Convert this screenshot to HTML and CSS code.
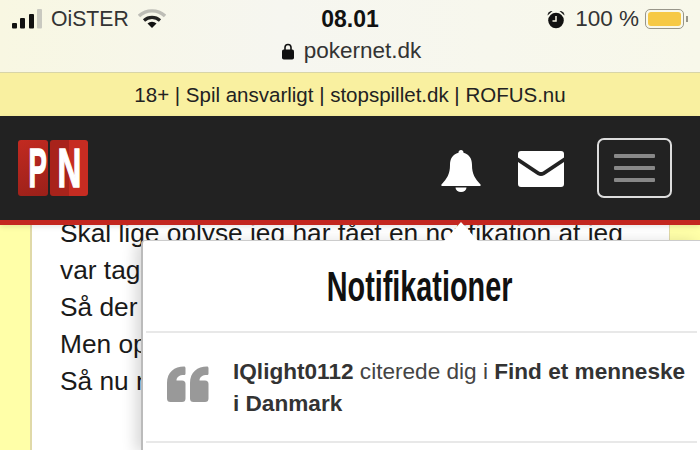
FILE: index.html
```html
<!DOCTYPE html>
<html lang="da">
<head>
    <meta charset="UTF-8">
    <title>pokernet.dk</title>
    <link rel="stylesheet" href="styles.css">
</head>
<body>
    <div class="browser-bar">
        <div class="status-row">
            <div class="status-left">
                <svg class="signal" width="31" height="20" viewBox="0 0 31 20">
                    <rect x="0" y="14" width="5" height="5.500" rx="1" fill="#111"/>
                    <rect x="8" y="9" width="5" height="10.500" rx="1" fill="#111"/>
                    <rect x="17" y="5" width="5" height="14.500" rx="1" fill="#111"/>
                    <rect x="25" y="0" width="5" height="19.500" rx="1" fill="#c9c9c0"/>
                </svg>
                <span>OiSTER</span>
                <svg class="wifi" width="28" height="22" viewBox="0 0 28 22">
                    <path d="M1 8 A19 19 0 0 1 27 8" fill="none" stroke="#bdbdb6" stroke-width="3.400"/>
                    <path d="M6 12.500 A12 12 0 0 1 22 12.500" fill="none" stroke="#222" stroke-width="3.200"/>
                    <path d="M14 20 L9.500 15.500 A6.500 6.500 0 0 1 18.500 15.500 Z" fill="#111"/>
                </svg>
            </div>
            <div class="clock">08.01</div>
            <div class="status-right">
                <svg class="alarm" width="18" height="19" viewBox="0 0 18 19">
                    <circle cx="9" cy="10.500" r="7.800" fill="#111"/>
                    <path d="M0.500 5.500A4.500 4.500 0 0 1 5.500 1z" fill="#111"/>
                    <path d="M17.500 5.500A4.500 4.500 0 0 0 12.500 1z" fill="#111"/>
                    <path d="M9 6V11H5.500" fill="none" stroke="#f7f6e6" stroke-width="1.500"/>
                </svg>
                <span>100 %</span>
                <div class="battery"><div class="battery-fill"></div></div>
                <div class="battery-tip"></div>
            </div>
        </div>
        <div class="url-row">
            <svg width="12" height="17" viewBox="0 0 12 17">
                <path d="M3 7V4.500a3 3 0 0 1 6 0V7" fill="none" stroke="#111" stroke-width="1.600"/>
                <rect x="0" y="6.500" width="12" height="10" rx="1.800" fill="#111"/>
            </svg>
            <span>pokernet.dk</span>
        </div>
    </div>

    <div class="age-banner">18+ | Spil ansvarligt | stopspillet.dk | ROFUS.nu</div>

    <nav class="navbar">
        <div class="logo">
            <div class="logo-tile logo-p"><span>P</span></div>
            <div class="logo-tile logo-n"><span>N</span></div>
        </div>
        <div class="nav-icons">
            <svg class="bell" width="40" height="42" viewBox="0 0 40 42">
                <path d="M20 0c1.500 0 2.500 1 2.500 2.700C28.500 4 31 9 31 15c0 9 3 13.500 8.500 19.500 .6 .9 0 1.500-1 1.500H1.500c-1 0-1.600-.6-1-1.500C6 28.500 9 24 9 15c0-6 2.500-11 8.500-12.300C17.500 1 18.500 0 20 0z" fill="#fff"/>
                <path d="M14.500 37.500a5.500 4.500 0 0 0 11 0z" fill="#fff"/>
            </svg>
            <svg class="mail" width="46" height="36" viewBox="0 0 46 36">
                <path d="M3 0H43a3 3 0 0 1 3 3V6.500L25 20.500a4 4 0 0 1-4 0L0 6.500V3a3 3 0 0 1 3-3z" fill="#fff"/>
                <path d="M0 11L19.500 24a6.500 6.500 0 0 0 7 0L46 11V33a3 3 0 0 1-3 3H3a3 3 0 0 1-3-3z" fill="#fff"/>
            </svg>
            <button class="menu-toggle">
                <span></span>
                <span></span>
                <span></span>
            </button>
        </div>
    </nav>

    <main class="page">
        <div class="post">
            <p>Skal lige oplyse jeg har fået en notifikation at jeg</p>
            <p>var tage</p>
            <p>Så der</p>
            <p>Men op</p>
            <p>Så nu n</p>
        </div>
    </main>

    <!-- dropdown lies over the post -->
    <div class="notif-arrow"></div>
    <div class="notif-panel">
        <div class="notif-title"><h3>Notifikationer</h3></div>
        <div class="notif-item">
            <svg class="quote" width="42" height="36" viewBox="0 0 42 36">
                <path d="M18.500 2V7.500C18.500 8.500 17.800 9 17 9 12.500 9 9.500 11 9.500 14.500H15a3.500 3.500 0 0 1 3.500 3.500V32.500a3.500 3.500 0 0 1-3.500 3.500H3.500a3.500 3.500 0 0 1-3.500-3.500V17C0 6 7.500 .5 17 .5c.8 0 1.500 .6 1.500 1.500z" fill="#999"/>
                <path d="M41.500 2V7.500C41.500 8.500 40.800 9 40 9 35.500 9 32.500 11 32.500 14.500H38a3.500 3.500 0 0 1 3.500 3.500V32.500a3.500 3.500 0 0 1-3.500 3.500H26.500a3.500 3.500 0 0 1-3.500-3.500V17C23 6 30.500 .5 40 .5c.8 0 1.500 .6 1.500 1.500z" fill="#999"/>
            </svg>
            <div class="notif-text"><b>IQlight0112</b> citerede dig i <b>Find et menneske i Danmark</b></div>
        </div>
    </div>
</body>
</html>
```

FILE: styles.css
```css
html, body {
    margin: 0;
    padding: 0;
}

body {
    position: relative;
    width: 700px;
    height: 450px;
    overflow: hidden;
    font-family: "Liberation Sans", Arial, sans-serif;
    background-color: #ffffa8;
}

.browser-bar {
    height: 73px;
    box-sizing: border-box;
    background: linear-gradient(90deg, #f8f7e2, #f6f6f0 40%, #f8f8ea);
    border-bottom: 1px solid #d8d5a8;
    color: #1a1a1a;
}

.status-row {
    display: flex;
    justify-content: space-between;
    align-items: center;
    height: 38px;
    padding: 0 12px;
}

.status-left, .status-right {
    display: flex;
    align-items: center;
    width: 210px;
    font-size: 21.200px;
    color: #333;
}

.status-left span {
    margin: 0 9px 0 8px;
}

.status-right {
    justify-content: flex-end;
    font-size: 22.500px;
}

.status-right span {
    margin: 0 6px 0 10px;
}

.clock {
    font-size: 23px;
    font-weight: bold;
    color: #111;
}

.battery {
    width: 39px;
    height: 20px;
    box-sizing: border-box;
    padding: 2px;
    border: 1.500px solid #98968a;
    border-radius: 5px;
}

.battery-fill {
    height: 100%;
    background-color: #f6c945;
    border-radius: 3px;
}

.battery-tip {
    width: 2px;
    height: 6px;
    margin-left: 2px;
    background-color: #98968a;
}

.url-row {
    display: flex;
    justify-content: center;
    align-items: center;
    gap: 10px;
    padding-left: 3px;
    font-size: 22.500px;
    color: #333;
}

.age-banner {
    height: 43px;
    line-height: 43px;
    text-align: center;
    font-size: 20.500px;
    color: #222;
    background-color: #f9f0a0;
}

.navbar {
    position: relative;
    z-index: 1;
    display: flex;
    justify-content: space-between;
    align-items: center;
    height: 104px;
    padding: 0 28px 0 18px;
    background-color: #222;
    border-bottom: 5px solid #c3261f;
    box-shadow: 0 2px 5px rgba(0, 0, 0, 0.1);
}

.logo {
    display: flex;
    gap: 2px;
}

.logo-tile {
    height: 56px;
    line-height: 56px;
    text-align: center;
    font-size: 55px;
    font-weight: bold;
    color: #fff;
    border-radius: 3px;
    -webkit-text-stroke: 1.500px #fff;
}

.logo-tile span {
    display: inline-block;
}

.logo-p {
    width: 30px;
    background: linear-gradient(160deg, #c22a21, #9a2019);
}

.logo-p span {
    width: 30px;
    transform: translateX(3px) scaleX(0.5);
}

.logo-n {
    width: 38px;
    background: linear-gradient(90deg, #a8231b 50%, #c62c22 50%);
}

.logo-n span {
    width: 38px;
    transform: scaleX(0.6);
}

.nav-icons {
    display: flex;
    align-items: center;
    gap: 33px;
}

.bell {
    margin: 6px 4px 0 0;
}

.mail {
    margin-top: 2px;
}

.menu-toggle {
    display: flex;
    flex-direction: column;
    justify-content: center;
    gap: 8px;
    width: 75px;
    height: 60px;
    padding: 0 15px;
    background: none;
    border: 2px solid #ddd;
    border-radius: 7px;
}

.menu-toggle span {
    height: 4px;
    background-color: #888;
    border-radius: 1px;
}

.page {
    display: flex;
    height: 235px;
    margin-top: -10px;
    padding: 0 30px;
}

.post {
    flex-grow: 1;
    padding: 0 28px;
    background-color: #fff;
    border-left: 2px solid #e0d9a8;
    border-right: 1px solid #e0d9a8;
    font-size: 26.300px;
    line-height: 37px;
    color: #1a1a1a;
}

.post p {
    margin: 0;
    white-space: nowrap;
}

.notif-arrow {
    position: absolute;
    z-index: 3;
    left: 444px;
    top: 222px;
    border-left: 17px solid transparent;
    border-right: 17px solid transparent;
    border-bottom: 19px solid #fff;
}

.notif-panel {
    position: absolute;
    z-index: 2;
    left: 141px;
    top: 240px;
    width: 559px;
    height: 210px;
    box-sizing: border-box;
    padding: 0 3px;
    background-color: #fff;
    border-left: 2px solid #bbb;
    border-top: 1px solid #ccc;
    border-radius: 4px 0 0 0;
    box-shadow: -6px 2px 14px rgba(0, 0, 0, 0.15);
}

.notif-title {
    height: 90px;
    text-align: center;
    border-bottom: 2px solid #e8e8e8;
}

.notif-title h3 {
    display: inline-block;
    margin: 0 4px 0 0;
    font-size: 43px;
    line-height: 90px;
    color: #111;
    transform: scaleX(0.67);
}

.notif-item {
    display: flex;
    align-items: center;
    gap: 24px;
    height: 108px;
    padding: 0 0 0 21px;
    border-bottom: 2px solid #e8e8e8;
}

.quote {
    flex-shrink: 0;
    margin-top: -6px;
}

.notif-text {
    width: 456px;
    font-size: 22.600px;
    line-height: 32px;
    color: #444;
    margin-top: 2px;
}

.notif-text b {
    color: #333;
}
```
